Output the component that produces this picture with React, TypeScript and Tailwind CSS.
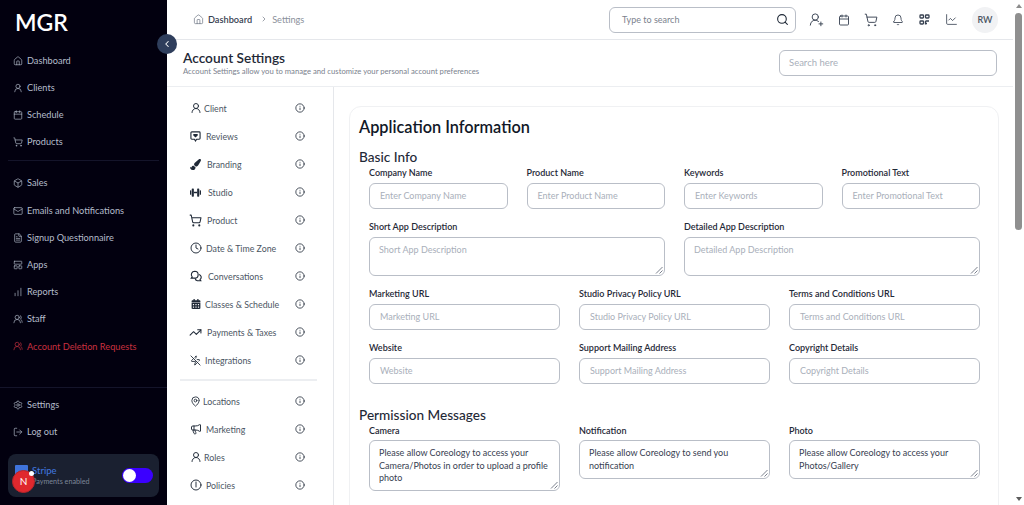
import React from 'react';
import {
  Home, UserRound, Calendar, ShoppingCart, Box, Mail, FileText, LayoutPanelTop, ChartNoAxesColumnIncreasing,
  UsersRound, Settings, LogOut, ChevronLeft, ChevronRight, Search, UserRoundPlus, Bell, ChartLine,
  Info, Clock, Clock6, TrendingUp, MapPin, Megaphone, ZapOff,
} from 'lucide-react';
import { FaCalendarAlt, FaPaintBrush } from 'react-icons/fa';

function ChatBubbles({ size = 13, className = '' }: { size?: number; className?: string }) {
  return (
    <svg width={size} height={size} viewBox="0 0 14 14" fill="none" stroke="currentColor" strokeWidth="1.3" className={className}>
      <path d="M5.5 1.5a4 4 0 0 1 4 4 4 4 0 0 1-4 4H1.5l1-1.4A4 4 0 0 1 5.5 1.5z" />
      <path d="M10.6 5.2a3.4 3.4 0 0 1 1.2 5.9l.8 1.4H8.6a3.4 3.4 0 0 1-2.6-2.8" />
    </svg>
  );
}

function ReviewBubble({ size = 12, className = '' }: { size?: number; className?: string }) {
  return (
    <svg width={size} height={size} viewBox="0 0 12 12" className={className}>
      <path d="M2 1h8a1 1 0 0 1 1 1v6a1 1 0 0 1-1 1H7.2L6 10.8 4.8 9H2a1 1 0 0 1-1-1V2a1 1 0 0 1 1-1z" fill="none" stroke="currentColor" strokeWidth="1.2" />
      <path d="M3.6 3.4h4.8v1.4L6 7 3.6 4.8z" fill="currentColor" />
    </svg>
  );
}

function Dumbbell({ size = 12, className = '' }: { size?: number; className?: string }) {
  return (
    <svg width={size} height={size} viewBox="0 0 12 12" fill="currentColor" className={className}>
      <rect x="0" y="3.5" width="1.4" height="5" rx="0.6" />
      <rect x="1.9" y="1.5" width="2.3" height="9" rx="0.8" />
      <rect x="4.2" y="5.2" width="3.6" height="1.6" />
      <rect x="7.8" y="1.5" width="2.3" height="9" rx="0.8" />
      <rect x="10.6" y="3.5" width="1.4" height="5" rx="0.6" />
    </svg>
  );
}

function QrGrid() {
  return (
    <svg width="11" height="11" viewBox="0 0 11 11" fill="none" stroke="currentColor" strokeWidth="1.3">
      <rect x="1" y="1" width="3.5" height="3" rx="0.8" />
      <rect x="6.5" y="1" width="3.5" height="3" rx="0.8" />
      <rect x="1" y="7" width="3.5" height="3" rx="0.8" />
      <path d="M6.5 7h3.5M6.5 9.5h1.5M6.5 7v3.5" />
    </svg>
  );
}

const topNav = [
  { label: 'Dashboard', icon: Home },
  { label: 'Clients', icon: UserRound },
  { label: 'Schedule', icon: Calendar },
  { label: 'Products', icon: ShoppingCart },
];

const midNav = [
  { label: 'Sales', icon: Box },
  { label: 'Emails and Notifications', icon: Mail },
  { label: 'Signup Questionnaire', icon: FileText },
  { label: 'Apps', icon: LayoutPanelTop },
  { label: 'Reports', icon: ChartNoAxesColumnIncreasing },
  { label: 'Staff', icon: UsersRound },
];

const settingsA = [
  { label: 'Client', icon: UserRound, gap: 'gap-[3px]', size: 12 },
  { label: 'Reviews', icon: ReviewBubble, gap: 'gap-[5px]', size: 11 },
  { label: 'Branding', icon: FaPaintBrush, gap: 'gap-[6px]', size: 11 },
  { label: 'Studio', icon: Dumbbell, gap: 'gap-[7px]', size: 11 },
  { label: 'Product', icon: ShoppingCart, gap: 'gap-[6px]', size: 13 },
  { label: 'Date & Time Zone', icon: Clock, gap: 'gap-[5px]', size: 12 },
  { label: 'Conversations', icon: ChatBubbles, gap: 'gap-[7px]', size: 12 },
  { label: 'Classes & Schedule', icon: FaCalendarAlt, gap: 'gap-[4px]', size: 10 },
  { label: 'Payments & Taxes', icon: TrendingUp, gap: 'gap-[6px]', size: 13 },
  { label: 'Integrations', icon: ZapOff, gap: 'gap-[4px]', size: 11 },
];

const settingsB = [
  { label: 'Locations', icon: MapPin, gap: 'gap-[2px]', size: 11 },
  { label: 'Marketing', icon: Megaphone, gap: 'gap-[5px]', size: 12 },
  { label: 'Roles', icon: UserRound, gap: 'gap-[3px]', size: 12 },
  { label: 'Policies', icon: Clock6, gap: 'gap-[5px]', size: 12 },
];

function SideItem({ label, icon: Icon, red = false }: { label: string; icon: React.ElementType; red?: boolean }) {
  return (
    <div className={`flex h-[27.2px] items-center gap-[4px] pl-[13px] text-[9.2px] ${red ? 'text-[#c9303f]' : 'text-[#b4bccb]'}`}>
      <Icon size={10} strokeWidth={1.6} />
      <span>{label}</span>
    </div>
  );
}

function SettingsRow({ label, icon: Icon, gap, size }: { label: string; icon: React.ElementType; gap: string; size: number }) {
  return (
    <div className="flex h-[28px] items-center justify-between pl-[23px] pr-[28px]">
      <div className={`flex items-center text-[8.8px] text-[#4b5563] ${gap}`}>
        <span className="flex w-[11px] justify-center text-[#1f2937]">
          <Icon size={size} strokeWidth={1.9} className="shrink-0" />
        </span>
        <span className="pt-[1px]">{label}</span>
      </div>
      <Info size={10} strokeWidth={1.9} className="text-[#1f2937]" />
    </div>
  );
}

function Field({ label, placeholder }: { label: string; placeholder: string }) {
  return (
    <div className="flex flex-col">
      <div className="h-[17px] text-[9px] font-semibold leading-[13px] text-[#1f2937]">{label}</div>
      <div className="flex h-[26px] items-center rounded-[6px] border border-[#b9bec7] bg-white pl-[10px] text-[9px] text-[#a9afba]">
        {placeholder}
      </div>
    </div>
  );
}

function AreaField({ label, text, filled = false, tall = false }: { label: string; text: string; filled?: boolean; tall?: boolean }) {
  return (
    <div className="flex flex-col">
      <div className={`text-[9px] font-semibold leading-[13px] text-[#1f2937] ${filled ? 'h-[16px]' : 'h-[17px]'}`}>{label}</div>
      <div
        className={`relative rounded-[6px] border border-[#b9bec7] bg-white py-[6px] pl-[9px] pr-[8px] text-[9px] leading-[12.5px] ${
          filled ? 'text-[#374151]' : 'text-[#a9afba]'
        } ${tall ? 'h-[51px]' : 'h-[39px]'}`}
      >
        {text}
        <svg width="8" height="8" viewBox="0 0 8 8" className="absolute bottom-[1px] right-[1px] text-[#6b7280]">
          <path d="M1 7.5 7.5 1M4.5 7.5l3-3" stroke="currentColor" strokeWidth="0.9" />
        </svg>
      </div>
    </div>
  );
}

export default function App() {
  return (
    <div className="relative flex h-[505px] w-[1024px] overflow-hidden bg-white font-['Lato',sans-serif]">
      {/* sidebar */}
      <aside className="flex h-full w-[167px] shrink-0 flex-col bg-[#02000f]">
        <div className="h-[47px] pl-[15px] pt-[8px] text-[23px] font-semibold leading-[28px] text-white">MGR</div>
        <div className="flex flex-col">
          {topNav.map((n) => <SideItem key={n.label} {...n} />)}
        </div>
        <div className="mx-[8px] mb-[9px] mt-[4px] h-px bg-[#14142a]" />
        <div className="flex flex-col">
          {midNav.map((n) => <SideItem key={n.label} {...n} />)}
          <SideItem label="Account Deletion Requests" icon={UsersRound} red />
        </div>
        <div className="mt-[27px] h-px bg-[#14142a]" />
        <div className="mt-[3px] flex flex-col">
          <SideItem label="Settings" icon={Settings} />
          <SideItem label="Log out" icon={LogOut} />
        </div>
        <div className="relative mx-[8px] mt-[9px] flex h-[43px] items-center justify-between rounded-[8px] bg-[#1a2030] pl-[24px] pr-[6px]">
          <div className="flex flex-col leading-[11px]">
            <span className="text-[9.5px] font-medium text-[#3f74dc]">Stripe</span>
            <span className="text-[7.2px] text-[#7d8698]">Payments enabled</span>
          </div>
          <div className="flex h-[15px] w-[31px] items-center rounded-full bg-[#3b00ff] pl-[1px]">
            <div className="h-[13px] w-[13px] rounded-full bg-white" />
          </div>
          {/* stripe logo and floating notification badge */}
          <div className="absolute left-[7px] top-[11px] h-[12px] w-[13px] rounded-[1px] bg-[#3f74dc]" />
          <div className="absolute left-[4px] top-[16px] flex h-[23px] w-[23px] items-center justify-center rounded-full border-[1.5px] border-[#b5252a] bg-[#e0282e] text-[10px] text-white">
            N
          </div>
          <div className="absolute left-[21px] top-[17px] h-[5px] w-[5px] rounded-full bg-white" />
        </div>
      </aside>

      {/* collapse toggle */}
      <div className="absolute left-[157px] top-[34px] z-10 flex h-[20px] w-[20px] items-center justify-center rounded-full bg-[#2f3e5c] text-white">
        <ChevronLeft size={10} strokeWidth={2.5} />
      </div>

      {/* main */}
      <main className="flex h-full min-w-0 flex-1 flex-col">
        <header className="flex h-[40px] shrink-0 items-center justify-between border-b border-[#e5e7eb] pl-[26px] pr-[15px]">
          <div className="flex items-center text-[9.2px]">
            <Home size={11} strokeWidth={1.5} className="text-[#6b7280]" />
            <span className="ml-[4px] font-semibold text-[#374151]">Dashboard</span>
            <ChevronRight size={8} className="ml-[8px] mr-[4px] text-[#6b7280]" />
            <span className="text-[#8b919c]">Settings</span>
          </div>
          <div className="flex items-center">
            <div className="flex h-[26px] w-[187px] items-center justify-between rounded-[6px] border border-[#b9bec7] pl-[12px] pr-[6px] text-[9px] text-[#7b828e]">
              Type to search
              <Search size={13} className="text-[#1f2937]" />
            </div>
            <div className="ml-[14px] flex items-center gap-[14px] text-[#374151]">
              <span className="flex w-[13px] justify-center"><UserRoundPlus size={15} strokeWidth={1.5} className="shrink-0" /></span>
              <span className="flex w-[13px] justify-center"><Calendar size={12} strokeWidth={1.8} className="shrink-0" /></span>
              <span className="flex w-[13px] justify-center"><ShoppingCart size={14} strokeWidth={1.6} className="shrink-0" /></span>
              <span className="flex w-[13px] justify-center"><Bell size={12} strokeWidth={1.7} className="shrink-0" /></span>
              <span className="flex w-[13px] justify-center"><QrGrid /></span>
              <span className="flex w-[13px] justify-center"><ChartLine size={13} strokeWidth={1.5} className="shrink-0" /></span>
            </div>
            <div className="ml-[14px] flex h-[26px] w-[26px] items-center justify-center rounded-full bg-[#f1f2f4] text-[9px] font-semibold text-[#4b5563]">
              RW
            </div>
          </div>
        </header>

        <div className="flex h-[47px] shrink-0 items-center justify-between border-b border-[#eceef1] pl-[16px] pr-[16px]">
          <div>
            <h1 className="text-[13.7px] font-semibold leading-[16px] text-[#1f2937]">Account Settings</h1>
            <p className="text-[7.7px] leading-[10px] text-[#7b828e]">
              Account Settings allow you to manage and customize your personal account preferences
            </p>
          </div>
          <div className="flex h-[26px] w-[218px] items-center rounded-[6px] border border-[#b9bec7] pl-[9px] text-[9.5px] text-[#a9afba]">
            Search here
          </div>
        </div>

        <div className="flex min-h-0 flex-1">
          <nav className="w-[167px] shrink-0 border-r border-[#e5e7eb] pt-[7px]">
            {settingsA.map((s) => <SettingsRow key={s.label} {...s} />)}
            <div className="ml-[13px] mr-[16px] mb-[6px] mt-[5px] h-[2px] bg-[#eceef1]" />
            {settingsB.map((s) => <SettingsRow key={s.label} {...s} />)}
          </nav>

          <div className="min-w-0 flex-1 pl-[15px] pr-[14px] pt-[19px]">
            <section className="h-[420px] rounded-[12px] border border-[#f0f1f3] pl-[9px] pr-[18px] pt-[9px]">
              <h2 className="text-[16.3px] font-semibold leading-[22px] text-[#111827]">Application Information</h2>
              <h3 className="mt-[10px] text-[13.6px] font-medium leading-[18px] text-[#1f2937]">Basic Info</h3>
              <div className="ml-[10px] flex flex-col">
                <div className="grid grid-cols-4 gap-x-[19px]">
                  <Field label="Company Name" placeholder="Enter Company Name" />
                  <Field label="Product Name" placeholder="Enter Product Name" />
                  <Field label="Keywords" placeholder="Enter Keywords" />
                  <Field label="Promotional Text" placeholder="Enter Promotional Text" />
                </div>
                <div className="mt-[11px] grid grid-cols-2 gap-x-[19px]">
                  <AreaField label="Short App Description" text="Short App Description" />
                  <AreaField label="Detailed App Description" text="Detailed App Description" />
                </div>
                <div className="mt-[11px] grid grid-cols-3 gap-x-[19px]">
                  <Field label="Marketing URL" placeholder="Marketing URL" />
                  <Field label="Studio Privacy Policy URL" placeholder="Studio Privacy Policy URL" />
                  <Field label="Terms and Conditions URL" placeholder="Terms and Conditions URL" />
                </div>
                <div className="mt-[11px] grid grid-cols-3 gap-x-[19px]">
                  <Field label="Website" placeholder="Website" />
                  <Field label="Support Mailing Address" placeholder="Support Mailing Address" />
                  <Field label="Copyright Details" placeholder="Copyright Details" />
                </div>
              </div>
              <h3 className="mt-[22px] text-[13.6px] font-medium leading-[18px] text-[#1f2937]">Permission Messages</h3>
              <div className="ml-[10px] grid grid-cols-3 items-start gap-x-[19px]">
                <AreaField filled tall label="Camera" text="Please allow Coreology to access your Camera/Photos in order to upload a profile photo" />
                <AreaField filled label="Notification" text="Please allow Coreology to send you notification" />
                <AreaField filled label="Photo" text="Please allow Coreology to access your Photos/Gallery" />
              </div>
            </section>
          </div>
        </div>
      </main>

      {/* scrollbar */}
      <div className="flex h-full w-[11px] shrink-0 flex-col items-center bg-white">
        <div className="mt-[4px] h-0 w-0 border-x-[3.5px] border-b-[4px] border-x-transparent border-b-[#8c8c8c]" />
        <div className="mt-[5px] h-[217px] w-[7px] rounded-full bg-[#8f8f8f]" />
        <div className="mb-[4px] mt-auto h-0 w-0 border-x-[3.5px] border-t-[4px] border-x-transparent border-t-[#5c5c5c]" />
      </div>
    </div>
  );
}
